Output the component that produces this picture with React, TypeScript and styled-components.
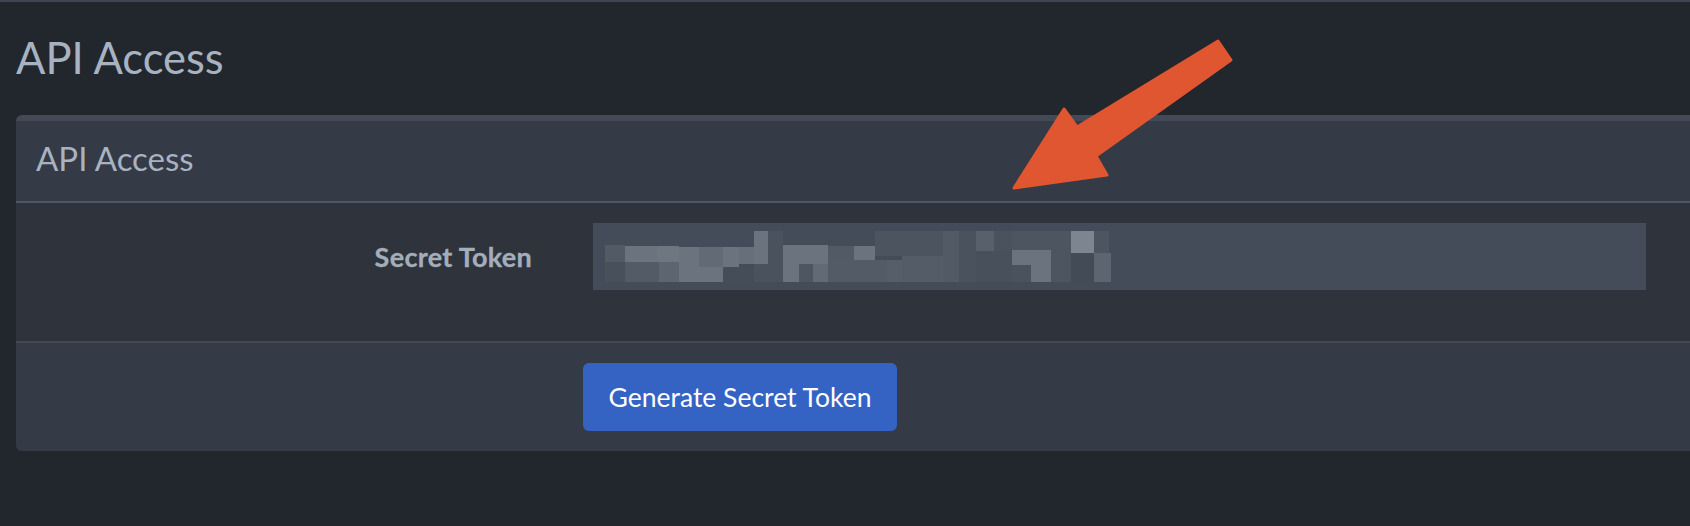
import React from "react";
import styled, { createGlobalStyle } from "styled-components";

const GlobalStyle = createGlobalStyle`
  html, body {
    margin: 0;
    padding: 0;
    background: #22262d;
    overflow: hidden;
  }
  body {
    font-family: Lato, "Open Sans", sans-serif;
  }
`;

const Page = styled.div`
  position: relative;
  min-height: 526px;
  box-sizing: border-box;
  border-top: 2px solid #3f4651;
  padding-left: 16px;
`;

const Title = styled.h1`
  margin: 29px 0 0 0;
  font-size: 43.5px;
  line-height: 52px;
  font-weight: 400;
  color: #a8b3c1;
`;

const Card = styled.section`
  margin-top: 32px;
  width: 1720px;
  border-top: 6px solid #434a56;
  border-radius: 6px;
  overflow: hidden;
  background: #343a46;
`;

const CardHeader = styled.header`
  box-sizing: border-box;
  height: 82px;
  padding: 17px 0 0 20px;
  border-bottom: 2px solid #4e5668;
  font-size: 33px;
  line-height: 40px;
  color: #a9b3c0;
`;

const CardBody = styled.div`
  box-sizing: border-box;
  height: 138px;
  padding-top: 20px;
  background: #2f333c;
  display: flex;
  align-items: flex-start;
  gap: 61px;
`;

const FieldLabel = styled.label`
  width: 516px;
  height: 67px;
  display: flex;
  align-items: center;
  justify-content: flex-end;
  font-size: 27px;
  font-weight: 700;
  letter-spacing: 0.3px;
  color: #a4aebb;
  -webkit-text-stroke: 0.3px #a4aebb;
`;

const TokenBox = styled.div`
  width: 1053px;
  height: 67px;
  background: #434c58;
  svg {
    display: block;
  }
`;

const CardFooter = styled.footer`
  box-sizing: border-box;
  border-top: 2px solid #424955;
  padding: 20px 0 20px 567px;
  background: #343a46;
`;

const PrimaryButton = styled.button`
  width: 314px;
  height: 68px;
  border: none;
  border-radius: 6px;
  background: #3463c4;
  color: #ffffff;
  font-family: Lato, "Open Sans", sans-serif;
  font-size: 26.5px;
  font-weight: 400;
  padding: 0;
  cursor: pointer;
`;

const Annotation = styled.svg`
  position: absolute;
  left: 1005px;
  top: 30px;
  width: 235px;
  height: 165px;
  overflow: visible;
`;

type Block = [number, number, number, number, string];

const mosaic: Block[] = [
  [12, 22, 20, 17, "#525a66"],
  [12, 39, 20, 20, "#48505c"],
  [32, 23, 32, 16, "#6b737e"],
  [32, 39, 34, 20, "#535b67"],
  [64, 23, 22, 16, "#6e7680"],
  [66, 39, 20, 20, "#5d6570"],
  [86, 24, 20, 20, "#6b737e"],
  [86, 44, 44, 15, "#6b737e"],
  [106, 24, 24, 20, "#626a75"],
  [130, 24, 16, 20, "#6b737e"],
  [130, 44, 31, 15, "#454d59"],
  [146, 24, 15, 17, "#66707a"],
  [161, 8, 14, 33, "#6b737e"],
  [161, 41, 29, 18, "#4a525e"],
  [175, 8, 15, 51, "#4a525e"],
  [190, 22, 45, 19, "#6b737e"],
  [190, 41, 16, 18, "#6b737e"],
  [206, 41, 14, 18, "#4e5662"],
  [220, 41, 15, 18, "#626a75"],
  [235, 23, 26, 14, "#525a66"],
  [261, 23, 21, 14, "#6b737e"],
  [235, 37, 59, 22, "#535b67"],
  [282, 8, 68, 25, "#4c5460"],
  [294, 37, 15, 22, "#565e6a"],
  [309, 33, 41, 26, "#545c68"],
  [350, 8, 16, 51, "#525a66"],
  [366, 8, 17, 51, "#4a525e"],
  [383, 8, 18, 20, "#57606b"],
  [383, 28, 36, 31, "#48505c"],
  [401, 8, 18, 20, "#4a525e"],
  [419, 8, 39, 19, "#4d5561"],
  [419, 27, 39, 15, "#6b737e"],
  [419, 42, 19, 17, "#4a525e"],
  [438, 42, 20, 17, "#6b737e"],
  [458, 8, 20, 51, "#4d5561"],
  [478, 8, 23, 22, "#7d8590"],
  [478, 30, 23, 29, "#434b57"],
  [501, 8, 15, 22, "#4d5561"],
  [501, 30, 17, 29, "#5d6570"],
];

function RedactedToken() {
  return (
    <svg width="1053" height="67" viewBox="0 0 1053 67" aria-label="redacted token">
      {mosaic.map(([x, y, w, h, c], i) => (
        <rect key={i} x={x} y={y} width={w} height={h} fill={c} />
      ))}
    </svg>
  );
}

export default function App() {
  return (
    <>
      <GlobalStyle />
      <Page>
        <Title>API Access</Title>
        <Card>
          <CardHeader>API Access</CardHeader>
          <CardBody>
            <FieldLabel>Secret Token</FieldLabel>
            <TokenBox>
              <RedactedToken />
            </TokenBox>
          </CardBody>
          <CardFooter>
            <PrimaryButton>Generate Secret Token</PrimaryButton>
          </CardFooter>
        </Card>
        <Annotation viewBox="0 0 235 165">
          <polygon
            points="213,9 226,28 91,124 102,143 9,156 59,77 72,95"
            fill="#e05631"
            stroke="#e05631"
            strokeWidth="3"
            strokeLinejoin="round"
          />
        </Annotation>
      </Page>
    </>
  );
}
